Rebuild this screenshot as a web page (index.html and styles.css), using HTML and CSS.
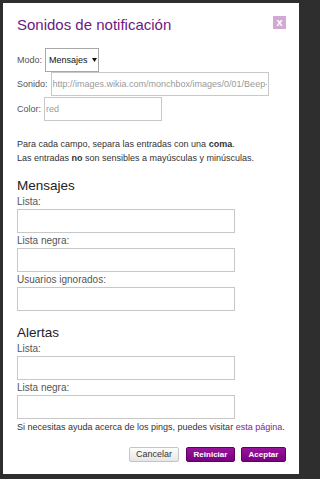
FILE: index.html
```html
<!DOCTYPE html>
<html lang="es">
<head>
<meta charset="utf-8">
<title>Sonidos de notificación</title>
<link rel="stylesheet" href="styles.css">
</head>
<body>
<div class="modal">
  <div class="header">
    <h1 class="title">Sonidos de notificación</h1>
    <span class="close">x</span>
  </div>
  <div class="rows">
    <div class="row">
      <span class="lbl">Modo:</span>
      <div class="select"><span>Mensajes</span><svg class="arrow" width="5" height="4" viewBox="0 0 5 4"><path d="M0 0H5L2.5 4Z" fill="#111"/></svg></div>
    </div>
    <div class="row">
      <span class="lbl">Sonido:</span>
      <input class="inp inp-sound" type="text" value="http://images.wikia.com/monchbox/images/0/01/Beep-Sound.ogg">
    </div>
    <div class="row row-color">
      <span class="lbl">Color:</span>
      <input class="inp inp-color" type="text" value="red">
    </div>
  </div>
  <p class="note">Para cada campo, separa las entradas con una <b>coma</b>.<br>Las entradas <b>no</b> son sensibles a mayúsculas y minúsculas.</p>
  <h2 class="section">Mensajes</h2>
  <label class="flabel">Lista:</label>
  <input class="field" type="text">
  <label class="flabel">Lista negra:</label>
  <input class="field" type="text">
  <label class="flabel">Usuarios ignorados:</label>
  <input class="field" type="text">
  <h2 class="section section-alerts">Alertas</h2>
  <label class="flabel">Lista:</label>
  <input class="field" type="text">
  <label class="flabel">Lista negra:</label>
  <input class="field" type="text">
  <p class="help">Si necesitas ayuda acerca de los pings, puedes visitar <a href="#">esta página</a>.</p>
  <div class="buttons">
    <button class="btn btn-cancel">Cancelar</button>
    <button class="btn btn-primary btn-reset">Reiniciar</button>
    <button class="btn btn-primary btn-ok">Aceptar</button>
  </div>
</div>
</body>
</html>
```
FILE: styles.css
```css
* { box-sizing: border-box; }
html {
  background: #2e2e2e;
}
html, body {
  margin: 0;
  padding: 0;
  height: 479px;
  overflow: hidden;
}
body {
  width: 303px;
  background: #2e2e2e;
  font-family: "Liberation Sans", Arial, sans-serif;
  padding-top: 3px;
}
.modal {
  margin-left: 3px;
  width: 296px;
  height: 471px;
  background: #fff;
  padding: 13px 13px 0 14px;
  display: flex;
  flex-direction: column;
  align-items: flex-start;
}
.header {
  display: flex;
  justify-content: space-between;
  align-items: flex-start;
  width: 100%;
  height: 18px;
}
.title {
  margin: 0;
  font-size: 15px;
  line-height: 18px;
  font-weight: normal;
  color: #6b1a82;
}
.close {
  width: 13px;
  height: 13px;
  background: #d4a8d6;
  color: #fff;
  font-size: 11px;
  line-height: 12px;
  text-align: center;
  font-weight: bold;
}
.rows {
  margin-top: 14px;
  display: flex;
  flex-direction: column;
}
.row {
  display: flex;
  align-items: center;
  height: 24px;
  gap: 3px;
}
.row-color { margin-top: 1px; }
.lbl {
  font-size: 9px;
  color: #555;
}
.select {
  width: 54px;
  height: 24px;
  border: 1px solid #a8a8a8;
  display: flex;
  align-items: center;
  padding-left: 3px;
  gap: 4px;
  font-size: 9px;
  color: #111;
}
.arrow { display: block; }
.inp {
  height: 24px;
  border: 1px solid #c8c8c8;
  padding: 0 1px;
  font-family: "Liberation Sans", Arial, sans-serif;
  font-size: 9px;
  color: #9a9a9a;
  outline: none;
}
.inp-sound { width: 218px; }
.inp-color { width: 118px; }
.note {
  margin: 16px 0 0;
  font-size: 9px;
  line-height: 14px;
  color: #333;
}
.section {
  margin: 13px 0 0;
  font-size: 13.5px;
  line-height: 16px;
  font-weight: normal;
  color: #222;
}
.section-alerts { margin-top: 14px; }
.flabel {
  display: block;
  font-size: 10px;
  line-height: 15px;
  color: #555;
}
.field {
  display: block;
  width: 218px;
  height: 24px;
  border: 1px solid #c8c8c8;
  outline: none;
  margin: 0;
}
.help {
  margin: 1px 0 0;
  font-size: 9px;
  line-height: 14px;
  color: #333;
}
.help a {
  color: #7a2a8c;
  text-decoration: none;
}
.buttons {
  margin-top: 13px;
  align-self: flex-end;
  display: flex;
  gap: 6px;
}
.btn {
  height: 15px;
  padding: 0;
  border-radius: 2px;
  font-family: "Liberation Sans", Arial, sans-serif;
  font-size: 9px;
  line-height: 13px;
}
.btn-cancel {
  width: 50px;
  margin-right: 1px;
  background: linear-gradient(#fdfdfd, #e6e6e6);
  border: 1px solid #c4c4c4;
  color: #333;
}
.btn-primary {
  background: linear-gradient(#9a149c, #7a007e);
  border: 1px solid #5a005e;
  color: #fff;
  font-size: 8px;
  font-weight: bold;
}
.btn-reset { width: 49px; }
.btn-ok { width: 45px; }
```
